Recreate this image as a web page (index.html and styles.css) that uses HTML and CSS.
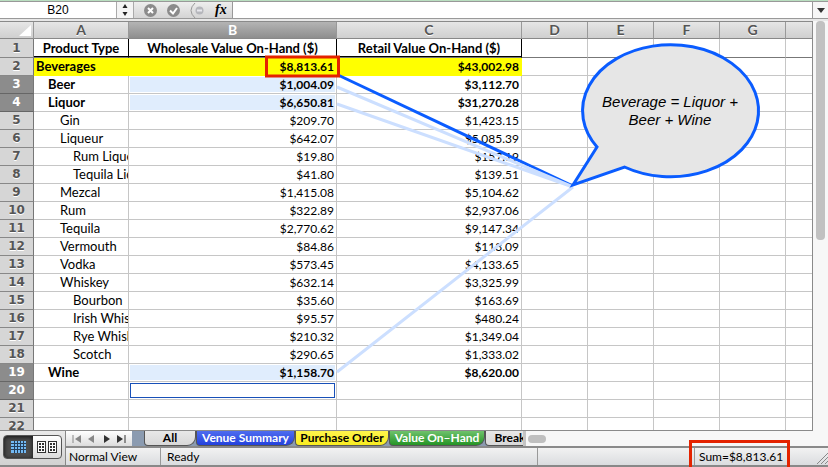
FILE: index.html
```
<!DOCTYPE html>
<html lang="en">
<head>
  <meta charset="UTF-8" />
  <meta name="viewport" content="width=device-width, initial-scale=1" />
  <title>Value On-Hand</title>
  <link rel="stylesheet" href="styles.css">
</head>
<body>

<div class="formula-bar">
  <input class="name-box" type="text" value="B20" aria-label="Name box" />
  <button class="stepper" aria-label="Choose name">
    <svg width="8" height="12" viewBox="0 0 8 12"><path d="M4 0l2.500 4h-5zM4 12L1.500 8h5z" fill="#222"/></svg>
  </button>
  <div class="formula-tools">
    <button aria-label="Cancel">
      <svg width="13" height="13" viewBox="0 0 13 13"><circle cx="6.500" cy="6.500" r="6.500" fill="#8b8b8b"/><path d="M4 4l5 5M9 4l-5 5" stroke="#fff" stroke-width="2"/></svg>
    </button>
    <button aria-label="Enter">
      <svg width="13" height="13" viewBox="0 0 13 13"><circle cx="6.500" cy="6.500" r="6.500" fill="#8b8b8b"/><path d="M3 6.500l3 3 4-5.500" stroke="#fff" stroke-width="2" fill="none"/></svg>
    </button>
    <button aria-label="Formula builder">
      <svg width="15" height="15" viewBox="0 0 15 15"><path d="M5 0Q-3 7.500 5 15" stroke="#999" fill="none"/><circle cx="9.500" cy="7.500" r="4" fill="#b6b7bc"/><path d="M7 7.500h5" stroke="#e8e8ee" stroke-width="2"/></svg>
    </button>
    <button class="fx" aria-label="Insert function">fx</button>
  </div>
  <input class="formula" type="text" aria-label="Formula" />
  <button class="expand" aria-label="Expand formula bar">
    <svg width="8" height="5" viewBox="0 0 8 5"><path d="M0 0h8L4 5z" fill="#333"/></svg>
  </button>
</div>

<div class="workspace">
  <div class="sheet">
    <table class="grid">
      <colgroup>
        <col class="col-num"><col class="col-a"><col class="col-b"><col class="col-c">
        <col class="col-std"><col class="col-std"><col class="col-std"><col class="col-std"><col>
      </colgroup>
      <thead>
        <tr>
          <th class="corner"><svg width="12" height="11" viewBox="0 0 12 11"><path d="M12 0v11H0z" fill="#fff"/></svg></th>
          <th>A</th><th class="active">B</th><th>C</th><th>D</th><th>E</th><th>F</th><th>G</th><th></th>
        </tr>
      </thead>
      <tbody id="rows"></tbody>
    </table>
  </div>
  <div class="scroll-v"><div class="thumb-v"></div></div>
</div>

<div class="footer">
  <div class="views">
    <div class="view-switch">
      <button class="on" aria-label="Normal view">
        <svg width="15" height="12" viewBox="0 0 15 12"><rect width="15" height="12" fill="#73b9f3"/><path d="M0 2.500h15M0 5.500h15M0 8.500h15M3.500 0v12M6.500 0v12M9.500 0v12M12.500 0v12" stroke="#263f5a"/></svg>
      </button>
      <button aria-label="Page layout view">
        <svg width="20" height="12" viewBox="0 0 20 12"><g fill="#fff" stroke="#333"><rect x=".5" y=".5" width="8" height="11"/><rect x="11.500" y=".5" width="8" height="11"/></g><path d="M2 3h5M2 6h5M2 9h5M13 3h5M13 6h5M13 9h5" stroke="#333" stroke-width="2" stroke-dasharray="2 1"/></svg>
      </button>
    </div>
  </div>
  <div class="footer-main">
    <div class="tab-row">
      <div class="tab-nav">
        <button aria-label="First sheet"><svg width="10" height="8" viewBox="0 0 10 8"><path d="M1 0v8" stroke="#888"/><path d="M9 0v8L3 4z" fill="#888"/></svg></button>
        <button aria-label="Previous sheet"><svg width="10" height="8" viewBox="0 0 10 8"><path d="M7 0v8L1 4z" fill="#888"/></svg></button>
        <button aria-label="Next sheet"><svg width="10" height="8" viewBox="0 0 10 8"><path d="M3 0v8l6-4z" fill="#333"/></svg></button>
        <button aria-label="Last sheet"><svg width="10" height="8" viewBox="0 0 10 8"><path d="M9 0v8" stroke="#333"/><path d="M1 0v8l6-4z" fill="#333"/></svg></button>
      </div>
      <div class="tabs">
        <button class="tab tab-all">All</button>
        <button class="tab blue tab-venue">Venue Summary</button>
        <button class="tab yellow tab-order">Purchase Order</button>
        <button class="tab green tab-value">Value On–Hand</button>
        <button class="tab tab-break">Break</button>
      </div>
      <div class="scroll-h"><div class="thumb-h"></div></div>
    </div>
    <div class="status">
      <div class="view-name">Normal View</div>
      <div class="ready">Ready</div>
      <div class="blank"></div>
      <div class="sum">Sum=$8,813.61</div>
      <svg class="grip" width="11" height="11" viewBox="0 0 11 11"><path d="M0 11L11 0M4 11l7-7M8 11l3-3" stroke="#888"/></svg>
    </div>
  </div>
</div>

<!-- arrows and callout drawn over the cells -->
<svg class="drawing">
  <path d="M338 75L573 186" stroke="#0a5cff" stroke-width="3"/>
  <path d="M337 87L573 187M337 104L573 187M337 372L573 187" stroke="#ccdfff" stroke-width="3"/>
  <path d="M597 147L573 185L624.500 167A88 66 0 1 0 597 147Z" fill="#e6e6e6" stroke="#0a5cff" stroke-width="3"/>
  <rect x="266.500" y="57" width="72" height="19" fill="none" stroke="#e42300" stroke-width="3"/>
</svg>
<div class="callout">Beverage = Liquor +<br>Beer + Wine</div>

<script src="rows.js"></script>
</body>
</html>
```
FILE: styles.css
```
* {
  box-sizing: border-box;
}
body {
  margin: 0;
  height: 100vh;
  display: flex;
  flex-direction: column;
  overflow: hidden;
  position: relative;
  background: #fff;
  font-family: Lato, sans-serif;
  font-size: 12px;
  color: #000;
}
button, input {
  font: inherit;
  color: inherit;
  border: 0;
  border-radius: 0;
  padding: 0;
  margin: 0;
  background: none;
}
svg {
  display: block;
}

/* formula bar */
.formula-bar {
  display: flex;
  flex: none;
  height: 19px;
  border-top: 1px solid #b9dfc0;
  border-bottom: 1px solid #999;
  box-shadow: inset 0 1px #999;
  padding-top: 1px;
}
.name-box {
  width: 116px;
  text-align: center;
  font-family: "Liberation Sans", sans-serif;
}
.stepper {
  width: 18px;
  display: grid;
  place-items: center;
  background: #f4f4f4;
  border: solid #aaa;
  border-width: 0 1px;
}
.formula-tools {
  display: flex;
  align-items: center;
  gap: 10px;
  width: 99px;
  padding-left: 10px;
  background: linear-gradient(#eee, #d4d4d4);
  border-right: 1px solid #999;
}
.fx {
  font: italic bold 14px/16px "Liberation Serif", serif;
}
.formula {
  flex: 1;
  min-width: 0;
}
.expand {
  width: 16px;
  display: grid;
  place-items: center;
  background: #f6f6f6;
  border-left: 1px solid #999;
}

/* sheet */
.workspace {
  display: flex;
  flex: 1;
  min-height: 0;
  border-top: 2px solid #e8e8e8;
}
.sheet {
  flex: 1;
  min-width: 0;
  overflow: hidden;
  border: solid #8a8a8a;
  border-width: 1px 1px 1px 0;
}
.grid {
  width: 100%;
  table-layout: fixed;
  border-collapse: separate;
  border-spacing: 0;
}
.col-num { width: 34px; }
.col-a { width: 95px; }
.col-b { width: 208px; }
.col-c { width: 185px; }
.col-std { width: 66px; }
.grid th {
  height: 17px;
  padding: 0;
  font-size: 14px;
  line-height: 16px;
  color: #555;
  background: linear-gradient(#e6e6e6, #cfcfcf);
  border-right: 1px solid #999;
  border-bottom: 1px solid #888;
  text-shadow: 0 1px #fff;
}
.grid thead .active {
  color: #fff;
  background: linear-gradient(#b4b4b4, #8e8e8e);
  text-shadow: none;
}
.grid .corner svg {
  margin-left: 19px;
}
.grid tbody th {
  height: 18px;
  font: bold 12px/17px "DejaVu Sans", sans-serif;
  background: #d6d6d6;
  border-right-color: #777;
}
.grid tbody .active {
  color: #fff;
  background: #8c8c8c;
  text-shadow: none;
  border-bottom-color: #666;
}
.grid td {
  height: 18px;
  padding: 0 2px;
  font-size: 13px;
  line-height: 17px;
  border-right: 1px solid #c6c6c6;
  border-bottom: 1px solid #c6c6c6;
  white-space: nowrap;
  overflow: hidden;
}
.grid th:last-child, .grid td:last-child {
  border-right: 0;
}
.grid .money {
  font-size: 12px;
  text-align: right;
}
.grid .indent-1 { padding-left: 14px; }
.grid .indent-2 { padding-left: 26px; }
.grid .indent-3 { padding-left: 39px; }
.bold td {
  font-weight: bold;
}
.grid .head th {
  height: 19px;
}
.grid .head td {
  height: 19px;
  border-bottom-color: #777;
}
.grid .head .title {
  text-align: center;
  font-weight: bold;
  border-right-color: #000;
  box-shadow: inset 0 -1px #000;
}
.grid .total {
  background: #ff0;
  border-color: #ff0;
}
.grid .picked {
  background: #e0edfd;
  box-shadow: inset 0 0 0 1px #fff;
}
.grid .cursor {
  box-shadow: inset 0 0 0 1px #fff, inset 0 0 0 2px #1850b8;
}
.scroll-v {
  width: 15px;
  padding: 0 3px;
  background: #f7f7f7;
}
.thumb-v {
  width: 9px;
  height: 219px;
  border-radius: 4px;
  background: #c1c1c1;
}

/* footer */
.footer {
  display: flex;
  flex: none;
  height: 36px;
  border-bottom: 2px solid #888;
}
.views {
  width: 66px;
  padding: 4px 3px;
  background: linear-gradient(#e9e9e9, #d2d2d2);
  border-right: 1px solid #888;
}
.view-switch {
  display: flex;
  height: 24px;
  border: 1px solid #555;
  border-radius: 4px;
  overflow: hidden;
  background: linear-gradient(#fff, #dcdcdc);
}
.view-switch button {
  flex: 1;
  display: grid;
  place-items: center;
}
.view-switch .on {
  background: #4b4b4b;
  box-shadow: inset 0 1px 4px #111;
}
.footer-main {
  flex: 1;
  min-width: 0;
}
.tab-row {
  display: flex;
  height: 17px;
  border-bottom: 2px solid #8a8a8a;
  background: #8b9bb0;
}
.tab-nav {
  display: flex;
  align-items: center;
  justify-content: space-around;
  width: 66px;
  padding: 0 4px;
  background: linear-gradient(#fff, #dcdcdc);
}
.tabs {
  display: flex;
  width: 391px;
  padding-left: 12px;
  overflow: hidden;
}
.tab {
  flex: none;
  height: 15px;
  line-height: 14px;
  font-weight: bold;
  background: linear-gradient(#e8e8e8, #d8d8d8);
  border: solid #555;
  border-width: 0 1px 1px;
  border-radius: 0 0 9px 4px;
}
.tab-all { width: 52px; }
.tab-venue { width: 99px; }
.tab-order { width: 94px; }
.tab-value { width: 96px; }
.tab-break { width: 50px; }
.tab.blue {
  color: #fff;
  background: linear-gradient(#4e6cf0, #2442dc);
}
.tab.yellow {
  background: linear-gradient(#fff44c, #f8ec20);
}
.tab.green {
  color: #fff;
  background: linear-gradient(#6fc26c, #259425);
}
.scroll-h {
  flex: 1;
  padding: 4px 2px;
  background: #f7f7f7;
  border-left: 3px solid #c4c4c4;
}
.thumb-h {
  width: 18px;
  height: 8px;
  border-radius: 4px;
  background: #bfbfbf;
}
.status {
  display: flex;
  height: 17px;
  line-height: 17px;
  background: linear-gradient(#f2f2f2, #dadcdf);
}
.status div {
  padding-left: 3px;
  border-right: 1px solid #999;
}
.view-name { width: 95px; }
.status .ready {
  width: 377px;
  padding-left: 6px;
}
.blank {
  flex: 1;
}
.status .sum {
  position: relative;
  width: 122px;
  padding-left: 4px;
  border: 0;
}
.sum::after {
  content: "";
  position: absolute;
  top: -8px;
  left: -6px;
  width: 95px;
  height: 24px;
  border: 3px solid #e42300;
}
.grip {
  margin-top: 5px;
}

/* drawing layer */
.drawing {
  position: absolute;
  top: 0;
  left: 0;
  width: 100%;
  height: 100%;
  pointer-events: none;
}
.callout {
  position: absolute;
  top: 93px;
  left: 590px;
  width: 160px;
  text-align: center;
  font: italic 15px/18px "Liberation Sans", sans-serif;
}
```
FILE: rows.js
```
const rows = [
  ["Beverages", 0, "$8,813.61", "$43,002.98"],
  ["Beer", 1, "$1,004.09", "$3,112.70"],
  ["Liquor", 1, "$6,650.81", "$31,270.28"],
  ["Gin", 2, "$209.70", "$1,423.15"],
  ["Liqueur", 2, "$642.07", "$5,085.39"],
  ["Rum Liqueur", 3, "$19.80", "$157.19"],
  ["Tequila Liqueur", 3, "$41.80", "$139.51"],
  ["Mezcal", 2, "$1,415.08", "$5,104.62"],
  ["Rum", 2, "$322.89", "$2,937.06"],
  ["Tequila", 2, "$2,770.62", "$9,147.34"],
  ["Vermouth", 2, "$84.86", "$113.09"],
  ["Vodka", 2, "$573.45", "$4,133.65"],
  ["Whiskey", 2, "$632.14", "$3,325.99"],
  ["Bourbon", 3, "$35.60", "$163.69"],
  ["Irish Whiskey", 3, "$95.57", "$480.24"],
  ["Rye Whiskey", 3, "$210.32", "$1,349.04"],
  ["Scotch", 3, "$290.65", "$1,333.02"],
  ["Wine", 1, "$1,158.70", "$8,620.00"],
  ["", 0, "", ""],
  ["", 0, "", ""],
  ["", 0, "", ""],
];
const selected = [3, 4, 19, 20];
const empty = "<td></td>".repeat(5);

let html = `<tr class="head"><th>1</th><td class="title">Product Type</td>
  <td class="title">Wholesale Value On-Hand ($)</td><td class="title">Retail Value On-Hand ($)</td>${empty}</tr>`;

rows.forEach(([name, level, wholesale, retail], i) => {
  const n = i + 2;
  const active = selected.includes(n);
  const total = n === 2 ? "total" : "";
  const mark = n === 20 ? "cursor" : active ? "picked" : "";
  html += `<tr class="${level < 2 ? "bold" : ""}">
    <th class="${active ? "active" : ""}">${n}</th>
    <td class="indent-${level} ${total}">${name}</td>
    <td class="money ${total} ${mark}">${wholesale}</td>
    <td class="money ${total}">${retail}</td>${empty}</tr>`;
});

document.getElementById("rows").innerHTML = html;
```
